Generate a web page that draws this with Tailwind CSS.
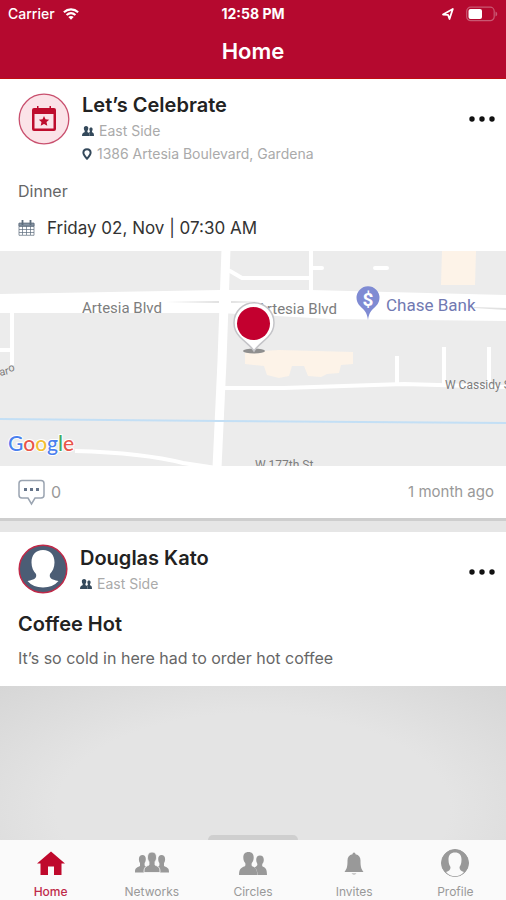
<!DOCTYPE html>
<html lang="en">

<head>
    <meta charset="UTF-8">
    <meta name="viewport" content="width=device-width, initial-scale=1.0">
    <title>Home</title>
    <script src="https://cdn.jsdelivr.net/npm/@tailwindcss/browser@4"></script>
</head>

<body class="flex min-h-screen flex-col bg-white font-['Inter','Liberation_Sans',sans-serif] text-[#222]">

    <!-- Shared icons -->
    <svg class="hidden">
        <symbol id="icon-pair" viewBox="0 0 28 23">
            <path d="M21 3.500c2.400 0 3.800 1.600 3.800 4.200 0 1.600-.5 3-1.300 3.900-.5 1.300-.4 2.200.1 3 3.200 1.400 4.200 2.500 4.400 8.400h-9.500c-.2-4-.8-6-3-7.500 2.500-1.300 3.500-2.300 2.600-4.200-.6-.9-.9-2.200-.9-3.600 0-2.600 1.400-4.200 3.800-4.200z" />
            <path d="M9.500 0c3.600 0 5.200 2.200 5.200 5.400 0 2.300-.8 4.200-1.900 5.500-.4 1.500-.3 2.600.3 3.400 4 1.700 4.900 2.700 5.200 8.700H0c.3-6 1.500-7 5.900-8.700.6-.8.7-1.900.3-3.400-1.100-1.300-1.900-3.200-1.900-5.500C4.300 2.200 5.900 0 9.500 0z" />
        </symbol>
        <symbol id="icon-dots" viewBox="0 0 26 6">
            <circle cx="3" cy="3" r="2.700" />
            <circle cx="13" cy="3" r="2.700" />
            <circle cx="23" cy="3" r="2.700" />
        </symbol>
    </svg>

    <!-- Status bar and title -->
    <header class="border-b border-[#c00d12] bg-[#b5092f] text-white">
        <div class="grid h-7 grid-cols-3 items-center px-2 text-sm font-medium">
            <div class="flex items-center gap-2">
                <span>Carrier</span>
                <svg class="h-3 w-4" viewBox="0 0 18 13" fill="none" stroke="#fff" stroke-width="2.400">
                    <path d="M1 4.500C5.500.3 12.500.3 17 4.500" />
                    <path d="M4 7.700c3-2.600 7-2.600 10 0" />
                    <path d="M9 13 6 10c1.700-1.500 4.300-1.500 6 0z" fill="#fff" stroke="none" />
                </svg>
            </div>
            <span class="text-center font-bold whitespace-nowrap">12:58 PM</span>
            <div class="flex items-center justify-end gap-3">
                <svg class="size-3" viewBox="0 0 12 12">
                    <path d="M1 6.500 10.800 1 7.500 11 6 6.800z" fill="none" stroke="#fff" stroke-width="1.800" stroke-linejoin="round" />
                </svg>
                <svg class="h-4 w-8" viewBox="0 0 32 16">
                    <rect x=".7" y="1.200" width="27.500" height="13.500" rx="4" fill="none" stroke="#c95872" stroke-width="1.200" />
                    <rect x="2.500" y="3" width="13.500" height="10" rx="2" fill="#fff" />
                    <path d="M29.500 5.500c2.300 1 2.300 4 0 5z" fill="#c95872" />
                </svg>
            </div>
        </div>
        <h1 class="pt-[6px] pb-[10px] text-center text-[22px] leading-[34px] font-semibold">Home</h1>
    </header>

    <main class="flex flex-1 flex-col">
        <!-- Event post -->
        <article>
            <div class="flex gap-3 pt-3 pr-2 pl-[18px]">
                <svg class="mt-[2px] size-[52px] shrink-0" viewBox="0 0 52 52">
                    <circle cx="26" cy="26" r="24.800" fill="#fbe3e8" stroke="#c9506e" stroke-width="1.300" />
                    <path d="M16 15h3v-2h1.500v2h11v-2H33v2h3q2 0 2 2v19q0 2-2 2H16q-2 0-2-2V17q0-2 2-2zm.5 6v14.500h19V21z" fill="#be0d2d" />
                    <path d="m26 23 1.500 3.300 3.700.4-2.700 2.400.8 3.600-3.300-1.800-3.300 1.800.8-3.600-2.700-2.400 3.700-.4z" fill="#be0d2d" />
                </svg>
                <div class="min-w-0 flex-1">
                    <h2 class="text-xl leading-7 font-semibold">Let’s Celebrate</h2>
                    <p class="flex items-center gap-[5px] text-sm leading-6 text-[#aaa]">
                        <svg class="h-[10px] w-3 fill-[#34495b]">
                            <use href="#icon-pair" />
                        </svg>
                        East Side
                    </p>
                    <p class="flex items-center gap-[5px] text-sm leading-[22px] text-[#aaa]">
                        <svg class="h-3 w-[10px]" viewBox="0 0 10 12">
                            <path d="M5 1.200c2.300 0 3.600 1.600 3.600 3.500C8.600 6.700 6.500 9 5 10.700 3.500 9 1.400 6.700 1.400 4.700c0-1.900 1.300-3.500 3.600-3.500z" fill="#fff" stroke="#34495b" stroke-width="2" />
                        </svg>
                        1386 Artesia Boulevard, Gardena
                    </p>
                </div>
                <button type="button" aria-label="Post options" class="mt-4 h-6 self-start px-[3px]">
                    <svg class="h-[6px] w-[26px] fill-[#111]">
                        <use href="#icon-dots" />
                    </svg>
                </button>
            </div>
            <div class="px-[18px] pt-3 pb-2">
                <p class="text-base leading-7 text-[#666]">Dinner</p>
                <p class="mt-2 flex items-center gap-3 text-[17px] leading-[30px] text-[#333]">
                    <svg class="h-4 w-[17px]" viewBox="0 0 17 16" fill="none" stroke="#5c6c7c">
                        <path d="M1 3h15v12.300H1zM1 6.500h15M1 9.500h15M1 12.500h15M4.500 6v9M8.500 6v9M12.500 6v9" stroke-width=".7" />
                        <path d="M1 3.500h15v2.500H1z" fill="#8795a4" stroke-width=".7" />
                        <path d="M4.500 0v5M12.500 0v5" stroke-width="1.800" />
                    </svg>
                    Friday 02, Nov | 07:30 AM
                </p>
            </div>

            <!-- Map -->
            <svg class="block w-full" viewBox="0 0 506 215" role="img" aria-label="Map of Artesia Blvd">
                <rect width="506" height="215" fill="#ececec" />
                <g fill="#fdf3e8">
                    <path d="M442 0h34l-1 34h-34z" />
                    <path d="M245 101l34-2 74 2v12l-12 1-2 8-12 1-6 3-13-1-4-10h-12l-3 10-10 2-12-3-3-9-19-2z" />
                </g>
                <g fill="none" stroke="#fff">
                    <path d="M230 20l12 7h69M311 0v42M311 17h11M375 17h12" stroke-width="4" stroke-linecap="round" />
                    <path d="M12 60v54M0 99h12M397 105v30M444 96v38M489 96v40" stroke-width="4" />
                    <path d="M224 137l60 0 120-4 102 3" stroke-width="4" />
                    <path d="M75 200c35 1 73 3 108 12l40 6" stroke-width="4" />
                </g>
                <path d="M0 43l220-4h90l196 5v26l-176-2-110-6H0z" fill="#fff" />
                <path d="M166 51l53-1v2zM231 50l30 1-30 1zM474 56l32 1v2l-32-2z" fill="#e2e2e2" />
                <path d="M226-2l-4 112-5 107" fill="none" stroke="#fff" stroke-width="9" />
                <path d="M0 168l220 2 286 2" fill="none" stroke="#c3dff5" stroke-width="1.800" />
                <g font-family="Roboto, sans-serif" fill="#7d7d7d">
                    <text x="82" y="62" font-size="15">Artesia Blvd</text>
                    <text x="257" y="63" font-size="15">Artesia Blvd</text>
                    <text x="445" y="138" font-size="12">W Cassidy St</text>
                    <text x="255" y="218" font-size="12">W 177th St</text>
                    <text x="0" y="125" font-size="11" transform="rotate(-12 0 125)">ar<tspan dy="-2">o</tspan></text>
                    <text x="386" y="60" font-size="17" fill="#7179b2">Chase Bank</text>
                </g>
                <path d="M368 69c-1-8-4-10-8-14a11.500 11.500 0 1 1 16 0c-4 4-7 6-8 14z" fill="#7f8bd3" />
                <text x="368" y="55" font-family="Roboto, sans-serif" font-size="19" font-weight="700" fill="#fff" text-anchor="middle">$</text>
                <ellipse cx="254" cy="100" rx="11" ry="2.500" fill="#8f8f8f" />
                <path d="M254 100c-3-5-8-8-14-14a20 20 0 1 1 28 0c-6 6-11 9-14 14z" fill="#fff" stroke="#c4c4c8" stroke-width="1.500" />
                <circle cx="253.500" cy="72.500" r="16.500" fill="#c3002f" />
                <text x="8" y="200" font-family="Lato, sans-serif" font-size="21" font-weight="500" fill="#4a80ee" stroke="#fff" stroke-width="2" paint-order="stroke"><tspan>G</tspan><tspan fill="#e8554a">o</tspan><tspan fill="#f3bd33">o</tspan><tspan>g</tspan><tspan fill="#45ab5e">l</tspan><tspan fill="#e8554a">e</tspan></text>
            </svg>

            <footer class="flex h-[52px] items-center justify-between pr-3 pl-[18px] text-[#999]">
                <button type="button" aria-label="Comments, 0" class="flex items-center gap-[6px] text-base">
                    <svg class="h-[27px] w-[27px]" viewBox="0 0 27 27">
                        <path d="M4 1.500h19q3 0 3 3V16q0 3-3 3h-6l-3.500 6-3.500-6H4q-3 0-3-3V4.500q0-3 3-3z" fill="none" stroke="#9aa4b1" stroke-width="1.500" />
                        <path d="M6 9h3v3H6zM12 9h3v3h-3zM18 9h3v3h-3z" fill="#66758a" />
                    </svg>
                    0
                </button>
                <time class="text-[15px]">1 month ago</time>
            </footer>
        </article>

        <div class="h-[14px] border-t-[3px] border-[#cecece] bg-[#e6e6e6]"></div>

        <!-- Text post -->
        <article class="flex flex-1 flex-col">
            <div class="flex gap-3 pt-3 pr-2 pl-[18px]">
                <svg class="size-[50px] shrink-0" viewBox="0 0 50 50">
                    <circle cx="25" cy="25" r="23.800" fill="#4b5d75" stroke="#c02948" stroke-width="1.500" />
                    <path d="M25 6c7.500 0 11.500 5 11.500 12.500 0 5-2 9-4.500 11.500-1 4 1 5.500 8.500 7Q35 43.500 25 43.500T9.500 37C17 35.500 19 34 18 30c-2.500-2.500-4.500-6.500-4.500-11.500C13.500 11 17.500 6 25 6z" fill="#fff" />
                </svg>
                <div class="min-w-0 flex-1">
                    <h2 class="text-xl leading-7 font-semibold">Douglas Kato</h2>
                    <p class="flex items-center gap-[5px] text-sm leading-6 text-[#aaa]">
                        <svg class="h-[10px] w-3 fill-[#34495b]">
                            <use href="#icon-pair" />
                        </svg>
                        East Side
                    </p>
                </div>
                <button type="button" aria-label="Post options" class="mt-4 h-6 self-start px-[3px]">
                    <svg class="h-[6px] w-[26px] fill-[#111]">
                        <use href="#icon-dots" />
                    </svg>
                </button>
            </div>
            <div class="px-[18px] pt-[14px] pb-[14px]">
                <h3 class="text-xl leading-7 font-semibold">Coffee Hot</h3>
                <p class="mt-[6px] text-base leading-7 text-[#666]">It’s so cold in here had to order hot coffee</p>
            </div>
            <div class="flex min-h-[120px] flex-1 items-end justify-center bg-radial-[at_50%_80%] from-[#e4e4e4] from-55% to-[#d6d6d6]">
                <div class="h-[5px] w-[90px] rounded-t-lg bg-[#cfcfcf]"></div>
            </div>
        </article>
    </main>

    <!-- Tab bar -->
    <nav class="grid h-[60px] grid-cols-5 bg-[#fafafa] text-xs leading-4 text-[#999]">
        <a href="#" aria-current="page" class="flex flex-col items-center justify-between pt-[10px] font-medium text-[#bf2b49]">
            <svg class="h-7 w-7" viewBox="0 0 28 28">
                <path d="M14 1.500 28 13.500h-3.500V25H17v-8.500h-6V25H3.500V13.500H0z" fill="#bf092c" />
            </svg>
            Home
        </a>
        <a href="#" class="flex flex-col items-center justify-between pt-[10px]">
            <svg class="h-7 w-[34px]" viewBox="0 0 34 28" fill="#999">
                <path id="side" d="M7.500 5c2 0 3.300 1.600 3.300 4 0 1.500-.4 3-1.200 4v2.500c.6.700 1.500 1.300 2 1.600-2 1.200-2.300 3-2.600 5.400H0c0-4 .6-4.500 5-6.500V13C4.200 12 3.900 10.500 3.900 9c0-2.400 1.500-4 3.600-4z" />
                <use href="#side" transform="matrix(-1 0 0 1 34 0)" />
                <path d="M17 2c3 0 4.500 2 4.500 5 0 2-.5 3.500-1.500 4.800V15c4.500 2 5 3 5 7.500H9c0-4.500.5-5.500 5-7.500v-3.200c-1-1.300-1.500-2.800-1.500-4.800 0-3 1.500-5 4.500-5z" stroke="#fafafa" stroke-width=".8" />
            </svg>
            Networks
        </a>
        <a href="#" class="flex flex-col items-center justify-between pt-[10px]">
            <svg class="mt-[2px] h-[23px] w-7 fill-[#999]">
                <use href="#icon-pair" />
            </svg>
            Circles
        </a>
        <a href="#" class="flex flex-col items-center justify-between pt-[10px]">
            <svg class="h-7 w-5" viewBox="0 0 20 28" fill="#999">
                <path d="M10 2.500q1.500 0 1.500 1.700c3.500.8 5 3 5 6.300 0 6 .5 8 3 11.500H.5c2.500-3.500 3-5.500 3-11.500 0-3.300 1.500-5.500 5-6.300Q8.500 2.500 10 2.500z" />
                <path d="M7.500 23h5q-2.500 4-5 0z" fill="#ccc" />
            </svg>
            Invites
        </a>
        <a href="#" class="flex flex-col items-center justify-between pt-2">
            <svg class="h-[30px] w-[30px]" viewBox="0 0 30 30">
                <circle cx="15" cy="15" r="13.500" fill="#999" stroke="#999" />
                <path d="M15 4.500c4.200 0 6.500 2.500 6.500 7 0 4-1 6-2 7.500 0 3 1.500 4 4.500 5Q20 28.300 15 28.300T6 24c3-1 4.500-2 4.500-5-1-1.500-2-3.500-2-7.500 0-4.500 2.300-7 6.500-7z" fill="#fafafa" />
            </svg>
            Profile
        </a>
    </nav>

</body>

</html>
